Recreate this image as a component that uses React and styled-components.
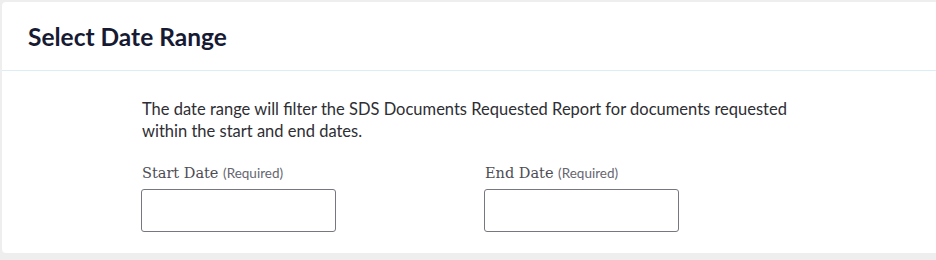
import React from "react";
import styled, { createGlobalStyle } from "styled-components";

const GlobalStyle = createGlobalStyle`
  html, body {
    margin: 0;
    padding: 0;
    background: #eeeeee;
  }
  body {
    font-family: "Lato", "Open Sans", sans-serif;
  }
`;

const Page = styled.div`
  padding: 2px 0 0 2px;
  height: 258px;
  box-sizing: border-box;
`;

const Card = styled.section`
  background: #ffffff;
  border-radius: 4px 0 0 4px;
  height: 251px;
  display: flex;
  flex-direction: column;
`;

const CardHeader = styled.header`
  height: 68px;
  display: flex;
  align-items: center;
  padding: 0 26px;
  border-bottom: 1px solid #dcedf7;
`;

const Title = styled.h2`
  margin: 0;
  font-family: "Lato", sans-serif;
  font-weight: 700;
  font-size: 24.5px;
  color: #171a33;
`;

const Body = styled.div`
  width: 654px;
  margin: 0 auto;
  padding-top: 27px;
`;

const Description = styled.p`
  margin: 0 0 21px;
  font-size: 16.5px;
  line-height: 22px;
  color: #2e2e33;
`;

const Fields = styled.div`
  display: grid;
  grid-template-columns: 195px 195px;
  column-gap: 148px;
  margin-left: -1px;
`;

const Field = styled.div`
  display: flex;
  flex-direction: column;
`;

const Label = styled.label`
  font-family: "DejaVu Serif", "Liberation Serif", serif;
  font-size: 14.5px;
  color: #4d4d55;
  line-height: 20px;
  margin: 0 0 6px 1px;
`;

const Hint = styled.span`
  font-family: "Lato", sans-serif;
  font-size: 13.5px;
  color: #666670;
`;

const DateInput = styled.input`
  box-sizing: border-box;
  width: 195px;
  height: 43px;
  border: 1px solid #77777f;
  border-radius: 3px;
  background: #fff;
  padding: 0 10px;
  font-size: 15px;
`;

export default function App() {
  return (
    <>
      <GlobalStyle />
      <Page>
        <Card>
          <CardHeader>
            <Title>Select Date Range</Title>
          </CardHeader>
          <Body>
            <Description>
              The date range will filter the SDS Documents Requested Report for documents requested
              within the start and end dates.
            </Description>
            <Fields>
              <Field>
                <Label>
                  Start Date <Hint>(Required)</Hint>
                </Label>
                <DateInput type="text" aria-label="Start Date" />
              </Field>
              <Field>
                <Label>
                  End Date <Hint>(Required)</Hint>
                </Label>
                <DateInput type="text" aria-label="End Date" />
              </Field>
            </Fields>
          </Body>
        </Card>
      </Page>
    </>
  );
}
